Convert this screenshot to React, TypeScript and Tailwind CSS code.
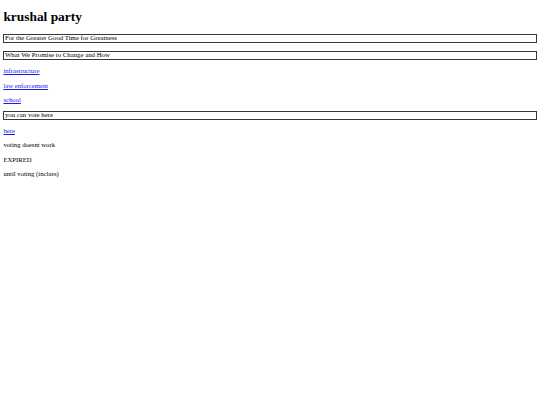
export default function App() {
  const serif = { fontFamily: '"Liberation Serif", "Times New Roman", serif' };
  const box = "border-[1.5px] border-[#383838] text-[6.8px] leading-[6.5px] h-[9.5px] px-[0.5px] text-black overflow-hidden";
  const line = "text-[6.7px] leading-[7.7px] h-[7.7px]";
  return (
    <div style={serif} className="min-h-[405px] w-[540px] bg-white px-[3.4px] text-black">
      <h1 className="pt-[9px] text-[13.4px] font-bold leading-[15.4px]">krushal party</h1>
      <div className="mt-[9.4px] flex flex-col">
        <div className={box}>For the Greater Good Time for Greatness</div>
        <div className={box + " mt-[7.6px]"}>What We Promise to Change and How</div>
        <a href="#" className={line + " mt-[7px] text-[#1a1aee] underline"}>infrastructure</a>
        <a href="#" className={line + " mt-[6.6px] text-[#1a1aee] underline"}>law enforcement</a>
        <a href="#" className={line + " mt-[6.6px] text-[#1a1aee] underline"}>school</a>
        <div className={box + " mt-[6.9px]"}>you can vote here</div>
        <a href="#" className={line + " mt-[7px] text-[#1a1aee] underline"}>here</a>
        <p className={line + " mt-[6.6px]"}>voting doesnt work</p>
        <p className={line + " mt-[6.6px]"}>EXPIRED</p>
        <p className={line + " mt-[6.6px]"}>until voting (inclass)</p>
      </div>
    </div>
  );
}
